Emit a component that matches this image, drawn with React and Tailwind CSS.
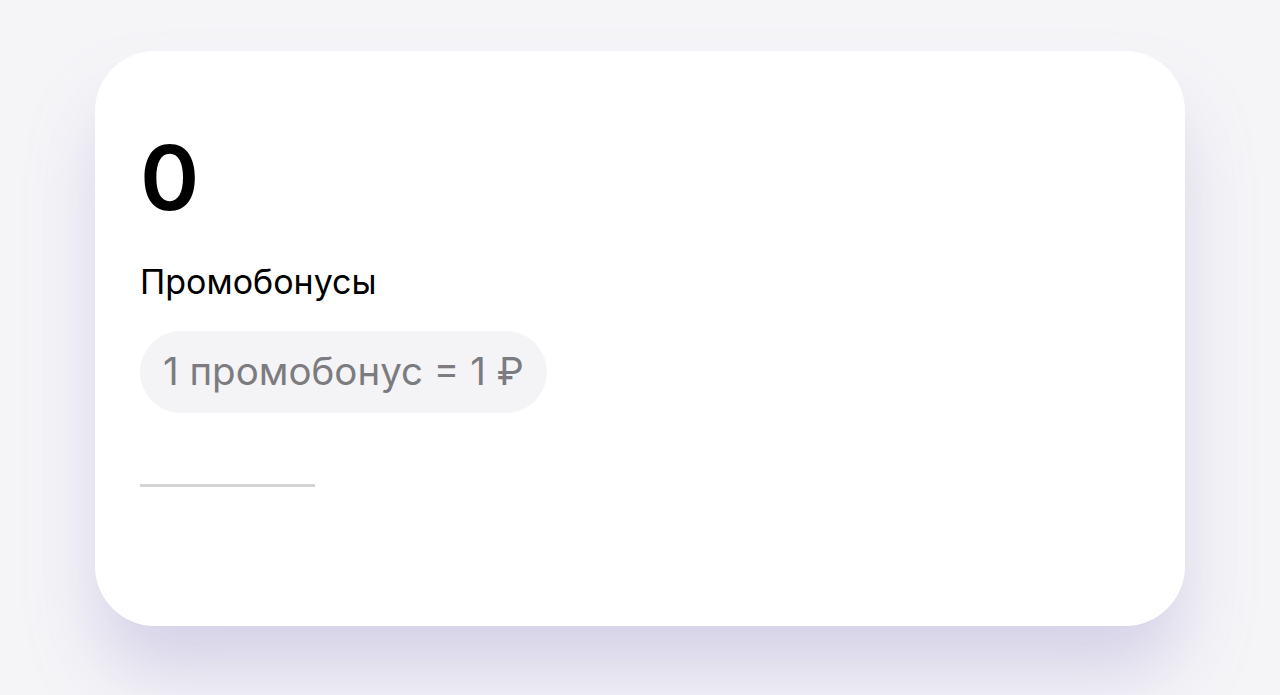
export default function App() {
    return (
        <div className="min-h-[695px] w-full bg-[#f5f5f8] pt-[51px] pl-[95px]" style={{ fontFamily: "Inter, 'Noto Sans', sans-serif" }}>
            <div className="flex h-[575px] w-[1090px] flex-col items-start rounded-[60px] bg-white pl-[45px] pt-[82px] shadow-[0_50px_70px_-5px_rgba(205,200,228,0.8)]">
                <div className="text-[90px] font-semibold leading-none tracking-tight text-black">0</div>
                <div className="mt-[42px] text-[34px] leading-none text-black">Промобонусы</div>
                <div className="mt-[32px] flex h-[82px] items-center rounded-full bg-[#f4f4f6] px-[23px] text-[38.5px] text-[#7c7c80]">
                    1 промобонус = 1 ₽
                </div>
                <div className="mt-[71px] h-[3px] w-[175px] bg-[#d3d3d5]"></div>
            </div>
        </div>
    );
}
